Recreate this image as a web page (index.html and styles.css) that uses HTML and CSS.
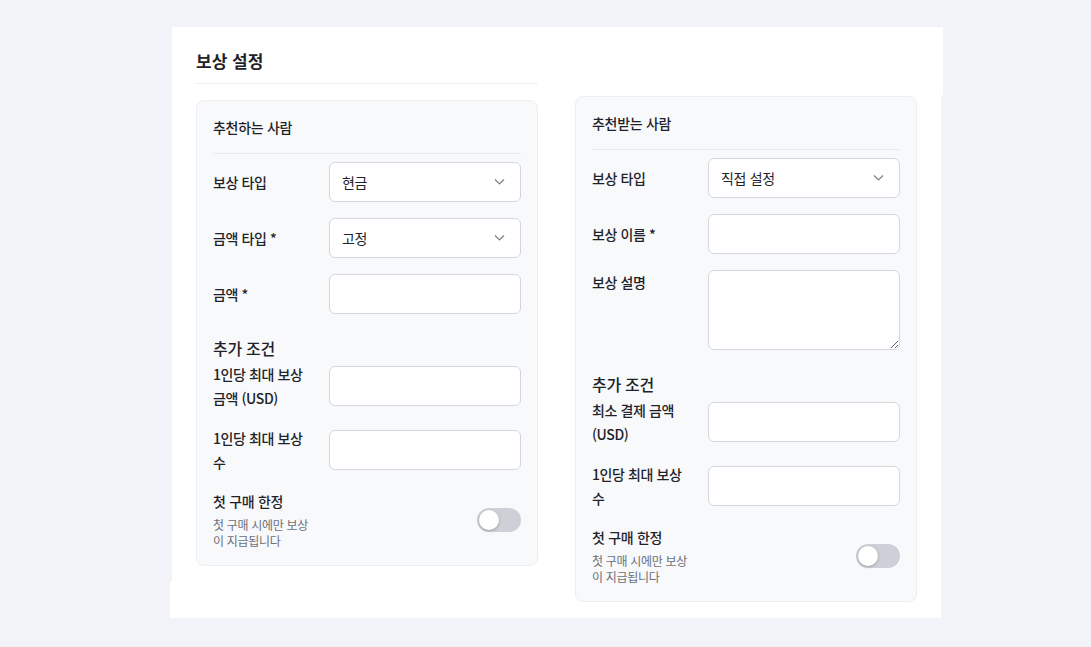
FILE: index.html
```html
<!DOCTYPE html>
<html lang="ko">
<head>
    <meta charset="UTF-8">
    <meta name="viewport" content="width=device-width, initial-scale=1.0">
    <title>보상 설정</title>
    <link rel="stylesheet" href="styles.css">
</head>
<body>

<div class="card">
    <div class="column">
        <h2 class="card-title">보상 설정</h2>

        <div class="panel">
            <h3 class="panel-title">추천하는 사람</h3>

            <div class="rows">
                <div class="row">
                    <label class="label">보상 타입</label>
                    <div class="select"><span>현금</span><svg class="chevron" viewBox="0 0 10 6"><path d="M0.5 0.5 L5 5 L9.5 0.5"/></svg></div>
                </div>
                <div class="row">
                    <label class="label">금액 타입 *</label>
                    <div class="select"><span>고정</span><svg class="chevron" viewBox="0 0 10 6"><path d="M0.5 0.5 L5 5 L9.5 0.5"/></svg></div>
                </div>
                <div class="row">
                    <label class="label">금액 *</label>
                    <input class="input" type="text">
                </div>
            </div>

            <div class="extra">
                <h4 class="extra-title">추가 조건</h4>
                <div class="rows">
                    <div class="row">
                        <label class="label">1인당 최대 보상 금액 (USD)</label>
                        <input class="input" type="text">
                    </div>
                    <div class="row">
                        <label class="label">1인당 최대 보상 수</label>
                        <input class="input" type="text">
                    </div>
                    <div class="toggle-row">
                        <div class="toggle-text">
                            <div class="toggle-title">첫 구매 한정</div>
                            <div class="toggle-desc">첫 구매 시에만 보상이 지급됩니다</div>
                        </div>
                        <div class="toggle"><span class="knob"></span></div>
                    </div>
                </div>
            </div>
        </div>
    </div>

    <div class="column column-right">
        <div class="panel">
            <h3 class="panel-title">추천받는 사람</h3>

            <div class="rows">
                <div class="row">
                    <label class="label">보상 타입</label>
                    <div class="select"><span>직접 설정</span><svg class="chevron" viewBox="0 0 10 6"><path d="M0.5 0.5 L5 5 L9.5 0.5"/></svg></div>
                </div>
                <div class="row">
                    <label class="label">보상 이름 *</label>
                    <input class="input" type="text">
                </div>
                <div class="row row-top">
                    <label class="label">보상 설명</label>
                    <textarea class="input textarea"></textarea>
                </div>
            </div>

            <div class="extra">
                <h4 class="extra-title">추가 조건</h4>
                <div class="rows">
                    <div class="row">
                        <label class="label">최소 결제 금액 (USD)</label>
                        <input class="input" type="text">
                    </div>
                    <div class="row">
                        <label class="label">1인당 최대 보상 수</label>
                        <input class="input" type="text">
                    </div>
                    <div class="toggle-row">
                        <div class="toggle-text">
                            <div class="toggle-title">첫 구매 한정</div>
                            <div class="toggle-desc">첫 구매 시에만 보상이 지급됩니다</div>
                        </div>
                        <div class="toggle"><span class="knob"></span></div>
                    </div>
                </div>
            </div>
        </div>
    </div>
</div>

</body>
</html>
```

FILE: styles.css
```css
body {
    margin: 0;
    padding: 27px 0 29px 172px;
    background-color: #f1f3f8;
    font-family: "Noto Sans CJK KR", "Noto Sans", sans-serif;
    color: #1f2329;
}

.card {
    position: relative;
    display: flex;
    gap: 37px;
    width: 721px;
    padding: 24px 24px 16px 24px;
    background-color: #fff;
    align-items: flex-start;
}

/* small white slivers around the card edges */
.card::before {
    content: "";
    position: absolute;
    top: 0;
    right: -2px;
    width: 2px;
    height: 68px;
    background: #fff;
}

.card::after {
    content: "";
    position: absolute;
    bottom: 0;
    left: -2px;
    width: 2px;
    height: 36px;
    background: #fff;
}

.column {
    width: 342px;
}

.column-right {
    padding-top: 45px;
}

.card-title {
    margin: 0 0 16px 0;
    padding-bottom: 12px;
    font-size: 17px;
    line-height: 20px;
    font-weight: 700;
    border-bottom: 1px solid #eef0f3;
}

.panel {
    background-color: #f8f9fb;
    border: 1px solid #eceef2;
    border-radius: 8px;
    padding: 16px;
}

.panel-title {
    margin: 0 0 8px 0;
    padding-bottom: 16px;
    font-size: 14px;
    line-height: 20px;
    font-weight: 500;
    letter-spacing: -0.3px;
    border-bottom: 1px solid #e9ebef;
}

.rows {
    display: flex;
    flex-direction: column;
    gap: 16px;
}

.row {
    display: flex;
    align-items: center;
    gap: 16px;
}

.row-top {
    align-items: flex-start;
}

.label {
    width: 100px;
    flex-shrink: 0;
    font-size: 14px;
    line-height: 24px;
    font-weight: 500;
    letter-spacing: -0.4px;
}

.input,
.select {
    box-sizing: border-box;
    width: 192px;
    height: 40px;
    border: 1px solid #d3d7dd;
    border-radius: 6px;
    background: #fff;
    font-family: inherit;
    font-size: 14px;
    padding: 0 12px;
    margin: 0;
}

.select {
    display: flex;
    align-items: center;
    justify-content: space-between;
    padding: 0 15px 0 12px;
    color: #1f2329;
    letter-spacing: -0.3px;
}

.chevron {
    width: 11px;
    height: 6px;
    fill: none;
    stroke: #7b818a;
    stroke-width: 1.2;
}

.textarea {
    height: 80px;
    resize: vertical;
    padding: 8px 12px;
}

.extra {
    margin-top: 22px;
}

.extra-title {
    margin: 0 0 2px 0;
    font-size: 16px;
    line-height: 24px;
    font-weight: 500;
    letter-spacing: -0.3px;
}

.toggle-row {
    display: flex;
    align-items: center;
    justify-content: space-between;
}

.toggle-text {
    width: 100px;
}

.toggle-title {
    font-size: 14px;
    line-height: 22px;
    font-weight: 500;
    letter-spacing: -0.3px;
}

.toggle-desc {
    margin-top: 5px;
    font-size: 12px;
    line-height: 16px;
    color: #6b7079;
    letter-spacing: -0.3px;
}

.toggle {
    position: relative;
    width: 44px;
    height: 24px;
    border-radius: 12px;
    background-color: #cdd1d7;
}

.knob {
    position: absolute;
    top: 2px;
    left: 2px;
    width: 20px;
    height: 20px;
    border-radius: 50%;
    background: #fff;
    box-shadow: 0 1px 3px rgba(0, 0, 0, 0.25);
}
```
